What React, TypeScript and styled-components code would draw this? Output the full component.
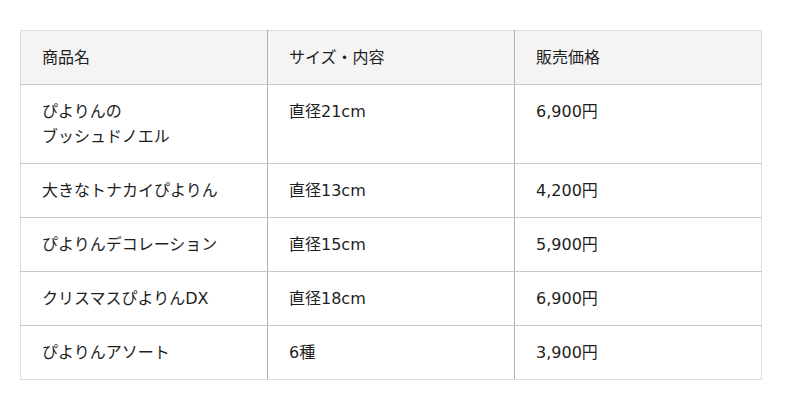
import React from "react";
import styled, { createGlobalStyle } from "styled-components";

const Global = createGlobalStyle`
  html, body { margin: 0; padding: 0; background: #fff; }
  body { font-family: "DejaVu Sans", "Noto Sans CJK JP", sans-serif; color: #1e1e1e; }
`;

const Wrap = styled.div`
  padding: 30px 0 0 20px;
`;

const Table = styled.table`
  width: 742px;
  border-collapse: collapse;
  table-layout: fixed;
  font-size: 16px;
  line-height: 25px;
  border: 1px solid #ddd;
`;

const Th = styled.th`
  background: #f4f4f4;
  font-weight: normal;
  text-align: left;
  padding: 14px 21px 14px;
  border: 1px solid #c8c8c8;
  border-left-color: #b0b0b0;
  border-right-color: #b0b0b0;
  border-top-color: #ddd;
  vertical-align: top;
  &:first-child { border-left-color: #ddd; }
  &:last-child { border-right-color: #ddd; }
`;

const Td = styled.td`
  padding: 14px 21px 14px;
  border: 1px solid #c8c8c8;
  border-left-color: #b0b0b0;
  border-right-color: #b0b0b0;
  vertical-align: top;
  tr:last-child > & { border-bottom-color: #ddd; }
  &:first-child { border-left-color: #ddd; }
  &:last-child { border-right-color: #ddd; }
`;

const rows: [React.ReactNode, string, string][] = [
  [<>ぴよりんの<br />ブッシュドノエル</>, "直径21cm", "6,900円"],
  ["大きなトナカイぴよりん", "直径13cm", "4,200円"],
  ["ぴよりんデコレーション", "直径15cm", "5,900円"],
  ["クリスマスぴよりんDX", "直径18cm", "6,900円"],
  ["ぴよりんアソート", "6種", "3,900円"],
];

export default function App() {
  return (
    <>
      <Global />
      <Wrap>
        <Table>
          <thead>
            <tr>
              <Th>商品名</Th>
              <Th>サイズ・内容</Th>
              <Th>販売価格</Th>
            </tr>
          </thead>
          <tbody>
            {rows.map((r, i) => (
              <tr key={i}>
                <Td>{r[0]}</Td>
                <Td>{r[1]}</Td>
                <Td>{r[2]}</Td>
              </tr>
            ))}
          </tbody>
        </Table>
      </Wrap>
    </>
  );
}
